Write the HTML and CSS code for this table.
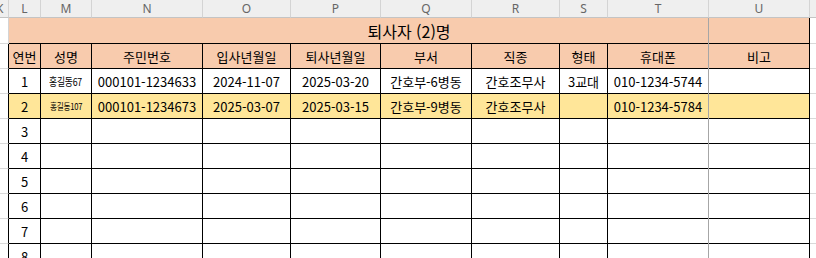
FILE: index.html
```html
<!DOCTYPE html>
<html lang="ko">
<head>
<meta charset="utf-8">
<title>퇴사자</title>
<link rel="stylesheet" href="styles.css">
</head>
<body>
<div class="sheet">
  <div class="row colhdr">
    <div class="c w-k"><span class="klabel">K</span></div>
    <div class="c w-l">L</div>
    <div class="c w-m">M</div>
    <div class="c w-n">N</div>
    <div class="c w-o">O</div>
    <div class="c w-p">P</div>
    <div class="c w-q">Q</div>
    <div class="c w-r">R</div>
    <div class="c w-s">S</div>
    <div class="c w-t">T</div>
    <div class="c w-u">U</div>
    <div class="c w-v"></div>
  </div>

  <div class="row title">
    <div class="c w-k side"></div>
    <div class="c merged">퇴사자 (2)명</div>
    <div class="c w-v side"></div>
  </div>

  <div class="row head">
    <div class="c w-k side"></div>
    <div class="c w-l">연번</div>
    <div class="c w-m">성명</div>
    <div class="c w-n">주민번호</div>
    <div class="c w-o">입사년월일</div>
    <div class="c w-p">퇴사년월일</div>
    <div class="c w-q">부서</div>
    <div class="c w-r">직종</div>
    <div class="c w-s">형태</div>
    <div class="c w-t">휴대폰</div>
    <div class="c w-u">비고</div>
    <div class="c w-v side"></div>
  </div>

  <div class="row data">
    <div class="c w-k side"></div>
    <div class="c w-l">1</div>
    <div class="c w-m"><span class="name1">홍길동67</span></div>
    <div class="c w-n">000101-1234633</div>
    <div class="c w-o">2024-11-07</div>
    <div class="c w-p">2025-03-20</div>
    <div class="c w-q">간호부-6병동</div>
    <div class="c w-r">간호조무사</div>
    <div class="c w-s">3교대</div>
    <div class="c w-t">010-1234-5744</div>
    <div class="c w-u"></div>
    <div class="c w-v side"></div>
  </div>

  <div class="row data hl">
    <div class="c w-k side"></div>
    <div class="c w-l">2</div>
    <div class="c w-m"><span class="name2">홍길동107</span></div>
    <div class="c w-n">000101-1234673</div>
    <div class="c w-o">2025-03-07</div>
    <div class="c w-p">2025-03-15</div>
    <div class="c w-q">간호부-9병동</div>
    <div class="c w-r">간호조무사</div>
    <div class="c w-s"></div>
    <div class="c w-t">010-1234-5784</div>
    <div class="c w-u"></div>
    <div class="c w-v side"></div>
  </div>

  <div class="row data">
    <div class="c w-k side"></div><div class="c w-l">3</div><div class="c w-m"></div><div class="c w-n"></div><div class="c w-o"></div><div class="c w-p"></div><div class="c w-q"></div><div class="c w-r"></div><div class="c w-s"></div><div class="c w-t"></div><div class="c w-u"></div><div class="c w-v side"></div>
  </div>
  <div class="row data">
    <div class="c w-k side"></div><div class="c w-l">4</div><div class="c w-m"></div><div class="c w-n"></div><div class="c w-o"></div><div class="c w-p"></div><div class="c w-q"></div><div class="c w-r"></div><div class="c w-s"></div><div class="c w-t"></div><div class="c w-u"></div><div class="c w-v side"></div>
  </div>
  <div class="row data">
    <div class="c w-k side"></div><div class="c w-l">5</div><div class="c w-m"></div><div class="c w-n"></div><div class="c w-o"></div><div class="c w-p"></div><div class="c w-q"></div><div class="c w-r"></div><div class="c w-s"></div><div class="c w-t"></div><div class="c w-u"></div><div class="c w-v side"></div>
  </div>
  <div class="row data">
    <div class="c w-k side"></div><div class="c w-l">6</div><div class="c w-m"></div><div class="c w-n"></div><div class="c w-o"></div><div class="c w-p"></div><div class="c w-q"></div><div class="c w-r"></div><div class="c w-s"></div><div class="c w-t"></div><div class="c w-u"></div><div class="c w-v side"></div>
  </div>
  <div class="row data">
    <div class="c w-k side"></div><div class="c w-l">7</div><div class="c w-m"></div><div class="c w-n"></div><div class="c w-o"></div><div class="c w-p"></div><div class="c w-q"></div><div class="c w-r"></div><div class="c w-s"></div><div class="c w-t"></div><div class="c w-u"></div><div class="c w-v side"></div>
  </div>
  <div class="row data">
    <div class="c w-k side"></div><div class="c w-l">8</div><div class="c w-m"></div><div class="c w-n"></div><div class="c w-o"></div><div class="c w-p"></div><div class="c w-q"></div><div class="c w-r"></div><div class="c w-s"></div><div class="c w-t"></div><div class="c w-u"></div><div class="c w-v side"></div>
  </div>

  <div class="pagebreak"></div>
</div>
</body>
</html>
```

FILE: styles.css
```css
html, body {
  margin: 0;
  padding: 0;
  background: #ffffff;
  overflow: hidden;
}

.sheet {
  position: relative;
  width: 816px;
  height: 258px;
  overflow: hidden;
  font-family: "Noto Sans CJK KR", "Noto Sans", sans-serif;
  font-size: 13px;
  color: #000000;
}

.row {
  display: flex;
  height: 25px;
}

.c {
  box-sizing: border-box;
  flex: none;
  height: 100%;
  display: flex;
  align-items: center;
  justify-content: center;
  overflow: hidden;
  white-space: nowrap;
  border-right: 1px solid #000000;
  border-bottom: 1px solid #000000;
}

.w-k { width: 9px; }
.w-l { width: 32px; }
.w-m { width: 51px; }
.w-n { width: 111px; }
.w-o { width: 88px; }
.w-p { width: 90px; }
.w-q { width: 91px; }
.w-r { width: 88px; }
.w-s { width: 48px; }
.w-t { width: 101px; }
.w-u { width: 101px; }
.w-v { flex: 1; border-right: none; }

.side {
  border-bottom-color: #d9d9d9;
}

/* Column letter header */
.colhdr {
  height: 18px;
  background: #efefef;
  font-family: "Noto Sans", "Liberation Sans", sans-serif;
  font-size: 12px;
  color: #666666;
}
.colhdr .c {
  border-right: 1px solid #d4d4d4;
  border-bottom: 1px solid #c4c4c4;
}
.colhdr .w-v { border-right: none; }
.colhdr .w-k {
  justify-content: flex-start;
}
.klabel {
  margin-left: -4px;
}

/* Title row */
.title {
  height: 26px;
}
.title .w-k {
  border-right-color: #d4d4d4;
}
.merged {
  width: 801px;
  background: #f8cbad;
  font-size: 16px;
}

/* Header row */
.head .c {
  background: #f8cbad;
}
.head .side {
  background: #ffffff;
}

/* Highlighted row */
.hl .c {
  background: #ffe699;
}
.hl .side {
  background: #ffffff;
}

.name1,
.name2 {
  display: inline-block;
  flex: none;
}
.name1 {
  font-size: 11px;
  letter-spacing: -0.3px;
  transform: scaleX(0.8);
}
.name2 {
  font-size: 9.5px;
  letter-spacing: -0.3px;
  transform: scaleX(0.8);
}

/* Page break preview line */
.pagebreak {
  position: absolute;
  left: 708px;
  top: 18px;
  bottom: 0;
  width: 1px;
  background: #a6a6a6;
}
```
